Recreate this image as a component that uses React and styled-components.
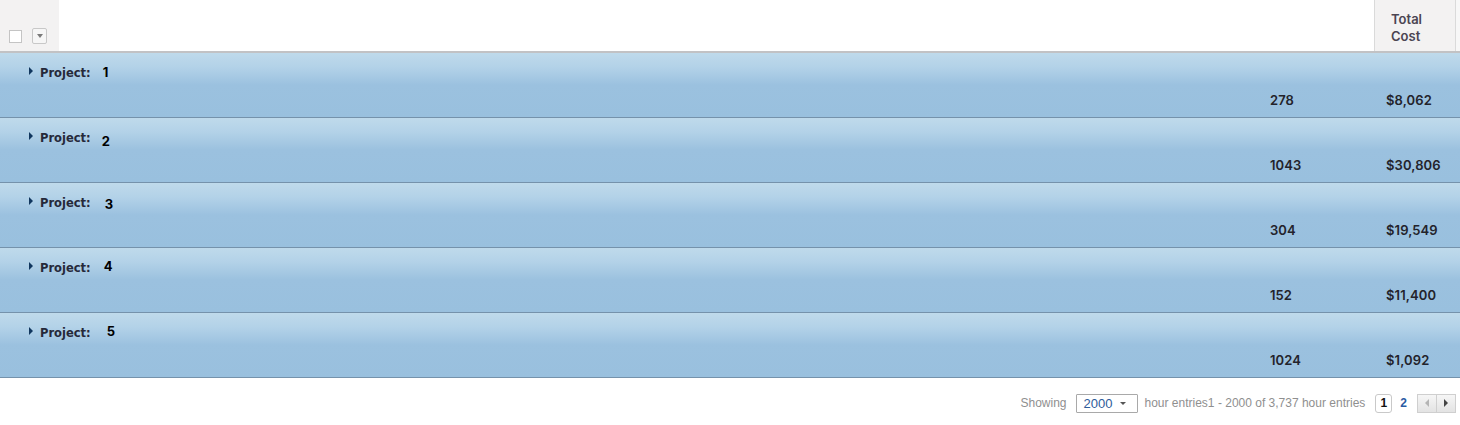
import React from "react";
import styled, { createGlobalStyle } from "styled-components";

const Global = createGlobalStyle`
  html, body { margin: 0; padding: 0; background: #fff; }
  body { font-family: "Liberation Sans", Arial, sans-serif; }
`;

const Page = styled.div`
  width: 1460px;
  display: flex;
  flex-direction: column;
`;

const Header = styled.div`
  display: flex;
  height: 51px;
  border-bottom: 2px solid #c2c2c4;
`;

const SelectCell = styled.div`
  width: 59px;
  background: #f3f2f2;
  display: flex;
  align-items: flex-end;
  padding: 0 0 7px 9px;
  box-sizing: border-box;
  gap: 10px;
`;

const Check = styled.div`
  width: 11px;
  height: 11px;
  border: 1px solid #c4c4c4;
  background: #fff;
  margin-bottom: 1px;
`;

const MenuBtn = styled.div`
  width: 13px;
  height: 14px;
  border: 1px solid #c8c8c8;
  border-radius: 2px;
  background: #f6f6f6;
  display: flex;
  align-items: center;
  justify-content: center;
  &::after {
    content: "";
    border-left: 3px solid transparent;
    border-right: 3px solid transparent;
    border-top: 4px solid #7a7a7a;
  }
`;

const Spacer = styled.div`
  flex: 1;
  background: #fff;
`;

const HeadCell = styled.div`
  width: 82px;
  background: #f3f2f2;
  border-left: 1px solid #dadada;
  border-right: 1px solid #dadada;
  padding: 11px 0 0 16px;
  box-sizing: border-box;
  font-family: Inter, "Open Sans", sans-serif;
  font-weight: 600;
  font-size: 13px;
  line-height: 17px;
  color: #4b4552;
`;

const Tail = styled.div`
  width: 4px;
  background: #f7f7f7;
`;

const Row = styled.div`
  height: 64px;
  border-bottom: 1px solid #7592ab;
  background: linear-gradient(to bottom, #bfdaeb 0px, #b3d2e8 14px, #9bc1df 32px, #99c0de 64px);
  display: grid;
  grid-template-columns: 1270px 116px 1fr;
  grid-template-rows: 39px 1fr;
`;

const GroupLabel = styled.div`
  grid-column: 1 / 2;
  grid-row: 1;
  display: flex;
  align-items: flex-start;
  padding: 13px 0 0 29px;
  font-family: "DejaVu Sans", Verdana, sans-serif;
  font-weight: bold;
  font-size: 11.5px;
  color: #26293a;
`;

const Caret = styled.span`
  width: 0;
  height: 0;
  border-top: 4px solid transparent;
  border-bottom: 4px solid transparent;
  border-left: 4px solid #10365e;
  margin: 1px 7px 0 0;
`;

const GroupValue = styled.span`
  font-family: Inter, "Open Sans", sans-serif;
  font-weight: 700;
  font-size: 13px;
  color: #000;
  margin-left: ${(p) => p.$dx}px;
  margin-top: ${(p) => p.$dy}px;
`;

const Num = styled.div`
  grid-row: 2;
  grid-column: ${(p) => p.$col};
  font-family: Inter, "Open Sans", sans-serif;
  font-weight: 600;
  font-size: 13px;
  color: #23232b;
  letter-spacing: 0.1px;
`;

const Footer = styled.div`
  height: 47px;
  display: flex;
  align-items: center;
  justify-content: flex-end;
  padding: 3px 4px 0 0;
  box-sizing: border-box;
  font-size: 12px;
  color: #8f8f8f;
`;

const Label = styled.span`
  margin-right: ${(p) => p.$mr || 0}px;
`;

const PageSize = styled.div`
  width: 53px;
  height: 17px;
  border: 1px solid #a9a9a9;
  border-radius: 1px;
  display: flex;
  align-items: center;
  padding-left: 7px;
  box-sizing: content-box;
  font-size: 13px;
  color: #2e5c9a;
  margin-right: 7px;
  &::after {
    content: "";
    margin-left: 8px;
    border-left: 3px solid transparent;
    border-right: 3px solid transparent;
    border-top: 3px solid #555;
  }
`;

const PageNum = styled.div`
  height: 17px;
  min-width: ${(p) => (p.$current ? "15px" : "0")};
  display: flex;
  align-items: center;
  justify-content: center;
  font-weight: bold;
  font-size: 12px;
  border: 1px solid ${(p) => (p.$current ? "#c9c9c9" : "transparent")};
  border-width: ${(p) => (p.$current ? "1px" : "0")};
  border-radius: 3px;
  color: ${(p) => (p.$current ? "#111" : "#2a5ba3")};
  margin-right: ${(p) => p.$mr}px;
`;

const Arrows = styled.div`
  display: flex;
  border: 1px solid #cfcfcf;
  height: 17px;
`;

const Arrow = styled.div`
  width: 18px;
  background: linear-gradient(#f6f6f6, #e3e3e3);
  border-left: ${(p) => (p.$right ? "1px solid #cfcfcf" : "none")};
  display: flex;
  align-items: center;
  justify-content: center;
  &::after {
    content: "";
    border-top: 4px solid transparent;
    border-bottom: 4px solid transparent;
    ${(p) =>
      p.$right
        ? "border-left: 4px solid #444;"
        : "border-right: 4px solid #b5b5b5;"}
  }
`;

const rows = [
  { id: "1", dx: 12, dy: -2, hours: "278", cost: "$8,062" },
  { id: "2", dx: 11, dy: 2, hours: "1043", cost: "$30,806" },
  { id: "3", dx: 14, dy: 0, hours: "304", cost: "$19,549" },
  { id: "4", dx: 13, dy: -3, hours: "152", cost: "$11,400" },
  { id: "5", dx: 16, dy: -3, hours: "1024", cost: "$1,092" },
];

export default function App() {
  return (
    <Page>
      <Global />
      <Header>
        <SelectCell>
          <Check />
          <MenuBtn />
        </SelectCell>
        <Spacer />
        <HeadCell>
          Total
          <br />
          Cost
        </HeadCell>
        <Tail />
      </Header>
      {rows.map((r) => (
        <Row key={r.id}>
          <GroupLabel>
            <Caret />
            Project:
            <GroupValue $dx={r.dx} $dy={r.dy}>
              {r.id}
            </GroupValue>
          </GroupLabel>
          <Num $col={2}>{r.hours}</Num>
          <Num $col={3}>{r.cost}</Num>
        </Row>
      ))}
      <Footer>
        <Label $mr={9}>Showing</Label>
        <PageSize>2000</PageSize>
        <Label $mr={10}>hour entries1 - 2000 of 3,737 hour entries</Label>
        <PageNum $current $mr={8}>1</PageNum>
        <PageNum $mr={10}>2</PageNum>
        <Arrows>
          <Arrow />
          <Arrow $right />
        </Arrows>
      </Footer>
    </Page>
  );
}
